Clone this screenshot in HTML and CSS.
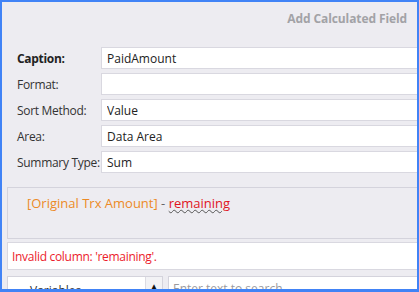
FILE: index.html
```html
<!DOCTYPE html>
<html lang="en">
<head>
<meta charset="UTF-8">
<title>Add Calculated Field</title>
<link rel="stylesheet" href="styles.css">
</head>
<body>
  <div class="dialog">
    <div class="dialog-header">
      <span class="dialog-title">Add Calculated Field</span>
    </div>
    <div class="field-list">
      <label class="field-label bold" for="caption">Caption:</label>
      <input class="field-input" id="caption" type="text" value="PaidAmount">
      <label class="field-label" for="format">Format:</label>
      <input class="field-input" id="format" type="text" value="">
      <label class="field-label" for="sortMethod">Sort Method:</label>
      <input class="field-input" id="sortMethod" type="text" value="Value">
      <label class="field-label" for="area">Area:</label>
      <input class="field-input" id="area" type="text" value="Data Area">
      <label class="field-label" for="summaryType">Summary Type:</label>
      <input class="field-input" id="summaryType" type="text" value="Sum">
    </div>
    <div class="expression-box">
      <span class="expr-field">[Original Trx Amount]</span>
      <span class="expr-op">-</span>
      <span class="expr-error">remaining</span>
    </div>
    <div class="error-box">Invalid column: 'remaining'.</div>
    <div class="bottom-row">
      <div class="item-list">
        <div class="item-list-text">Variables</div>
        <div class="scroll-btn">&#9650;</div>
      </div>
      <input class="search-input" type="text" placeholder="Enter text to search...">
    </div>
  </div>
</body>
</html>
```

FILE: styles.css
```css
html, body {
  margin: 0;
  padding: 0;
}
body {
  font-family: "Open Sans", "Noto Sans", Arial, sans-serif;
  font-size: 12px;
  color: #333;
}
.dialog {
  width: 419px;
  height: 292px;
  box-sizing: border-box;
  border: 2px solid #4183f6;
  border-bottom-width: 3px;
  background-color: #edecf1;
  overflow: hidden;
}
.dialog-header {
  height: 45px;
  display: flex;
  justify-content: flex-end;
  padding: 8px 10px 0 0;
  box-sizing: border-box;
}
.dialog-title {
  font-weight: bold;
  font-size: 12px;
  color: #a2a2a6;
  letter-spacing: -0.1px;
}
.field-list {
  display: grid;
  grid-template-columns: 84px 1fr;
  row-gap: 4px;
  padding-left: 15px;
  align-items: center;
}
.field-label {
  font-size: 12px;
  color: #333;
  letter-spacing: -0.3px;
  white-space: nowrap;
}
.field-label.bold {
  font-weight: bold;
  color: #222;
}
.field-input {
  height: 22px;
  box-sizing: border-box;
  border: 1px solid #d9d8e0;
  border-right: none;
  background: #fff;
  padding: 0 5px;
  font-family: inherit;
  font-size: 12px;
  color: #222;
  outline: none;
}
.expression-box {
  margin: 14px 0 0 5px;
  height: 52px;
  box-sizing: border-box;
  border: 1px solid #d4d3dc;
  border-right: none;
  padding: 6px 0 0 19px;
  font-size: 13px;
}
.expr-field {
  color: #ec8a26;
}
.expr-op {
  color: #666;
}
.expr-error {
  color: #e0141e;
  text-decoration: underline wavy #555;
  text-decoration-thickness: 1px;
}
.error-box {
  margin: 3px 0 0 5px;
  height: 28px;
  box-sizing: border-box;
  border: 1px solid #d9d8e0;
  border-right: none;
  background: #fff;
  padding: 5px 0 0 4px;
  color: #ec1c2c;
  font-size: 12px;
  letter-spacing: -0.3px;
}
.bottom-row {
  display: flex;
  gap: 5px;
  margin: 6px 0 0 5px;
}
.item-list {
  width: 156px;
  height: 30px;
  box-sizing: border-box;
  border: 1px solid #d4d3dc;
  background: #fff;
  display: flex;
}
.item-list-text {
  flex: 1;
  padding: 5px 0 0 22px;
  color: #333;
}
.scroll-btn {
  width: 17px;
  border-left: 1px solid #dcdbe2;
  background: #f2f2f5;
  font-size: 8px;
  text-align: center;
  padding-top: 3px;
  color: #111;
  box-sizing: border-box;
}
.search-input {
  flex: 1;
  height: 30px;
  box-sizing: border-box;
  border: 1px solid #d4d3dc;
  border-right: none;
  background: #fff;
  padding: 0 0 6px 4px;
  font-family: inherit;
  font-size: 12px;
  outline: none;
}
.search-input::placeholder {
  color: #9a9a9e;
}
```
